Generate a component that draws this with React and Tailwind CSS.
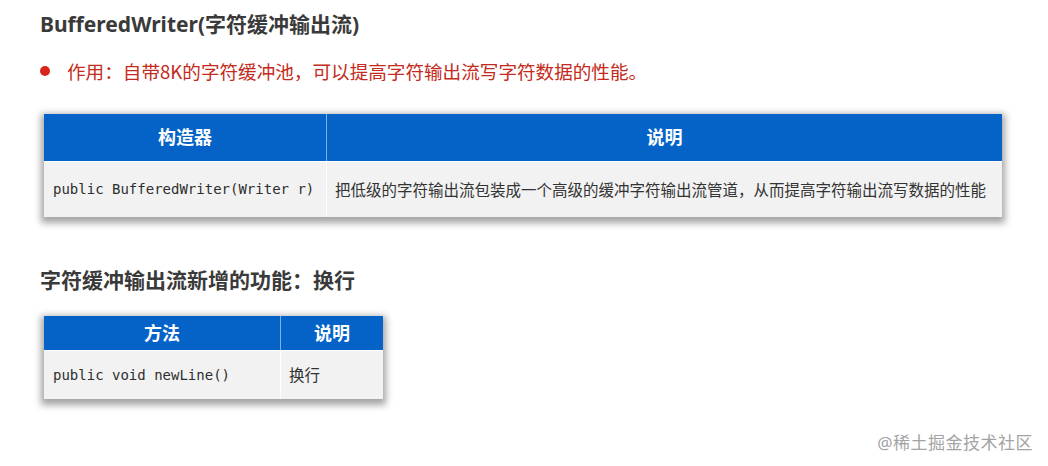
import React from 'react';

const cjk = { fontFamily: '"Noto Sans", "Noto Sans CJK SC", sans-serif' };
const cjkFirst = { fontFamily: '"Noto Sans CJK SC", "Noto Sans", sans-serif' };
const mono = { fontFamily: '"DejaVu Sans Mono", "Noto Sans CJK SC", monospace' };

function App() {
    return (
        <div className="relative w-[1048px] h-[466px] bg-white overflow-hidden text-[#333] [text-spacing-trim:space-all]" style={cjk}>
            <div className="flex flex-col pl-[40px]">
                {/* Title */}
                <h1 className="mt-[11px] h-[26px] leading-[26px] text-[21px] font-bold text-[#3a3a3a]">
                    BufferedWriter(字符缓冲输出流)
                </h1>

                {/* Bullet */}
                <div className="mt-[21px] h-[26px] flex items-center">
                    <span className="w-[10px] h-[10px] rounded-full bg-[#d9261c]" />
                    <span className="ml-[17px] text-[18.6px] text-[#c42a20]" style={cjkFirst}>
                        作用：自带8K的字符缓冲池，可以提高字符输出流写字符数据的性能。
                    </span>
                </div>

                {/* Constructor table */}
                <div className="mt-[30px] ml-[4px] w-[958px] bg-white shadow-[0_3px_7px_3px_rgba(0,0,0,0.36)]">
                    <div className="flex h-[47px] bg-[#0563c8] text-white text-[18px] font-bold">
                        <div className="w-[283px] flex items-center justify-center border-r border-[#7fb0e4]">构造器</div>
                        <div className="flex-1 flex items-center justify-center">说明</div>
                    </div>
                    <div className="flex h-[56px] bg-[#f2f2f2] border-t border-white">
                        <div className="w-[283px] flex items-center pl-[9px] text-[14px] text-[#2e2e2e] border-r border-white" style={mono}>
                            public BufferedWriter(Writer r)
                        </div>
                        <div className="flex-1 flex items-center pl-[8px] text-[15.5px]" style={cjkFirst}>
                            把低级的字符输出流包装成一个高级的缓冲字符输出流管道，从而提高字符输出流写数据的性能
                        </div>
                    </div>
                </div>

                {/* Section 2 heading */}
                <h2 className="mt-[50px] h-[26px] leading-[26px] text-[21px] font-bold text-[#3a3a3a]">
                    字符缓冲输出流新增的功能：换行
                </h2>

                {/* Method table */}
                <div className="mt-[23px] ml-[4px] w-[339px] bg-white shadow-[0_3px_7px_3px_rgba(0,0,0,0.36)]">
                    <div className="flex h-[34px] bg-[#0563c8] text-white text-[18px] font-bold">
                        <div className="w-[237px] flex items-center justify-center border-r border-[#7fb0e4]">方法</div>
                        <div className="flex-1 flex items-center justify-center">说明</div>
                    </div>
                    <div className="flex h-[49px] bg-[#f2f2f2] border-t border-white">
                        <div className="w-[237px] flex items-center pl-[9px] text-[14px] text-[#2e2e2e] border-r border-white" style={mono}>
                            public void newLine()
                        </div>
                        <div className="flex-1 flex items-center pl-[8px] text-[15.5px]" style={cjkFirst}>换行</div>
                    </div>
                </div>
            </div>

            {/* Watermark */}
            <div className="absolute right-[15px] top-[430px] text-[17px] text-[#a3a3a3] tracking-[0.5px]">
                @稀土掘金技术社区
            </div>
        </div>
    );
}

export default App;
